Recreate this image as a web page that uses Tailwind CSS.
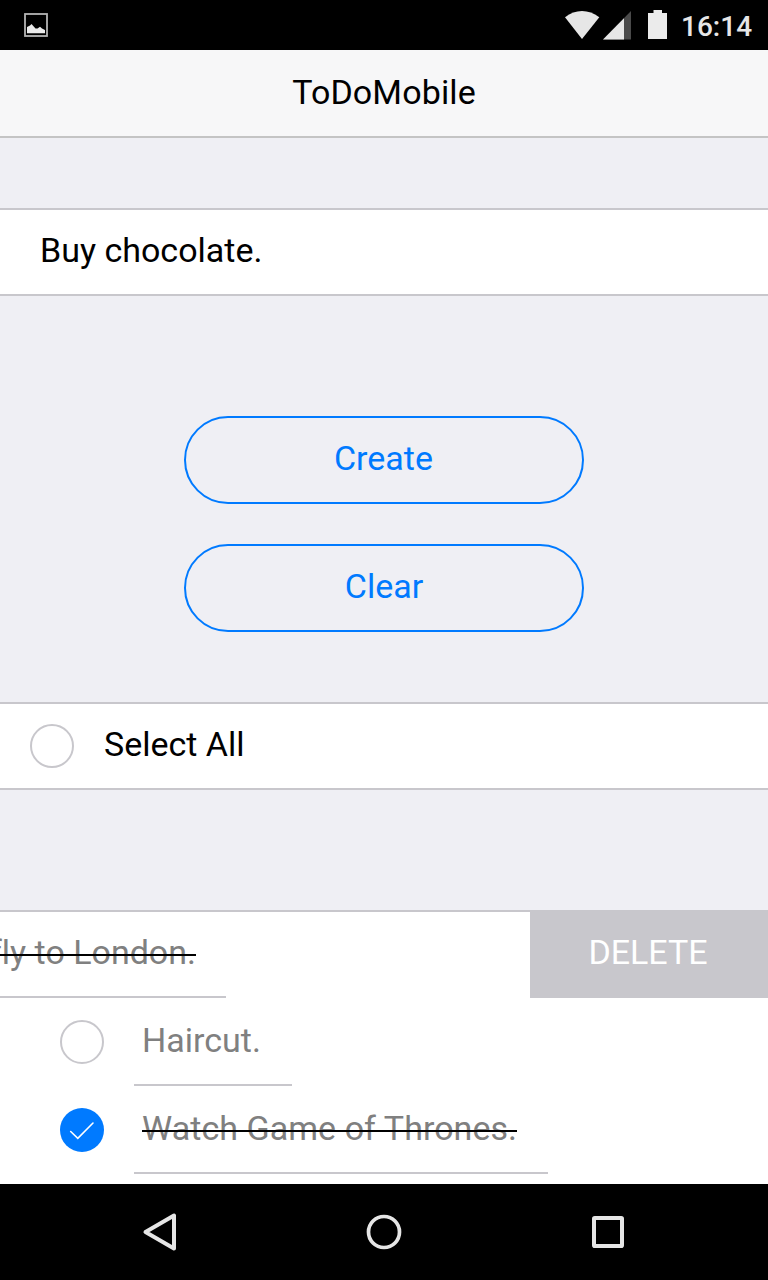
<!DOCTYPE html>
<html lang="en">
<head>
<meta charset="utf-8">
<title>ToDoMobile</title>
<script src="https://cdn.jsdelivr.net/npm/@tailwindcss/browser@4"></script>
</head>
<body class="flex h-[1280px] w-[768px] flex-col overflow-hidden bg-[#efeff4] font-[Roboto,sans-serif] text-[34px] leading-[40px] text-black [font-variant-ligatures:none]">
  <div class="flex h-[50px] shrink-0 items-start bg-black text-[#e6e6e6]">
    <svg class="ml-6 mt-[13px] h-6 w-6 shrink-0" viewBox="0 0 24 24">
      <rect x="1" y="1" width="22" height="22" fill="none" stroke="#b4b4b4" stroke-width="1.8"/>
      <path d="M3 20.300V14L6 12.500L7.500 11L11.500 15.500L13.500 15.500L16 13.800L18 15.500L21 17V20.300Z" fill="#ebebeb"/>
    </svg>
    <svg class="ml-auto h-[50px] w-[110px] shrink-0" viewBox="0 0 110 50">
      <path d="M7 17.200Q15 11 24 11T41.300 17.200L24 39Z" fill="#e6e6e6"/>
      <path d="M45 39.500L73 11V39.500Z" fill="#4a4a4a"/>
      <path d="M45 39.500L66 18.200V39.500Z" fill="#e6e6e6"/>
      <path d="M90 13H95.500V10H104V13H109V39H90Z" fill="#ebebeb"/>
    </svg>
    <div class="mt-[10px] w-[100px] pl-[13px] text-[28px] font-medium leading-[33px]">16:14</div>
  </div>

  <header class="h-[88px] shrink-0 border-b-2 border-[#c4c4c4] bg-[#f7f7f8] pt-[22px] text-center tracking-[0.12px]">ToDoMobile</header>

  <div class="mt-[70px] h-[88px] shrink-0 border-y-2 border-[#c8c7cc] bg-white pl-10 pt-5">Buy chocolate.</div>

  <div class="mt-[120px] flex shrink-0 flex-col items-center gap-10 text-[#007aff]">
    <button class="h-[88px] w-[400px] rounded-full border-2 border-[#007aff] pb-1 pr-px">Create</button>
    <button class="h-[88px] w-[400px] rounded-full border-2 border-[#007aff] pb-1">Clear</button>
  </div>

  <div class="mt-[70px] flex h-[88px] shrink-0 items-start border-y-2 border-[#c8c7cc] bg-white pl-[30px] pt-5">
    <span class="h-11 w-11 rounded-full border-2 border-[#c8c7cc]"></span>
    <span class="ml-[30px]">Select All</span>
  </div>

  <main class="mt-[120px] flex h-[274px] shrink-0 flex-col bg-white text-[#808080]">
    <div class="flex h-[88px] overflow-hidden">
      <!-- Row swiped left: its text runs off the screen edge -->
      <div class="w-[530px] overflow-hidden border-t-2 border-[#c8c7cc]">
        <div class="flex h-[86px] w-[226px] justify-end whitespace-nowrap border-b-2 border-[#c8c7cc] pr-[30px] pt-5">
          <span class="relative h-10 shrink-0">fly to London.<span class="absolute inset-x-0 top-[22px] h-0.5 bg-black"></span></span>
        </div>
      </div>
      <div class="w-[238px] bg-[#c8c7cc] pr-0.5 pt-[22px] text-center text-white">DELETE</div>
    </div>
    <div class="flex h-[88px] shrink-0 items-start pl-[60px]">
      <span class="mt-[22px] h-11 w-11 rounded-full border-2 border-[#c8c7cc]"></span>
      <div class="ml-[30px] h-[88px] w-[158px] border-b-2 border-[#c8c7cc] pl-2 pt-[22px]">Haircut.</div>
    </div>
    <div class="flex h-[88px] shrink-0 items-start pl-[60px]">
      <span class="mt-[22px] h-11 w-11 rounded-full bg-[#007aff]">
        <svg class="h-11 w-11" viewBox="0 0 44 44"><path d="M10.700 23.500L17.800 30.300L33 15" fill="none" stroke="#fff" stroke-width="1.600" stroke-linecap="round"/></svg>
      </span>
      <div class="ml-[30px] flex h-[88px] w-[414px] items-start whitespace-nowrap border-b-2 border-[#c8c7cc] pl-2 pt-[22px] tracking-[0.05px]">
        <span class="relative h-10">Watch Game of Thrones.<span class="absolute inset-x-0 top-[22px] h-0.5 bg-black"></span></span>
      </div>
    </div>
  </main>

  <nav class="flex h-24 shrink-0 items-center justify-between bg-black px-[140px]">
    <svg class="h-10 w-10" viewBox="0 0 40 40"><path d="M5.500 20L34 3.500V36.500Z" fill="none" stroke="#e6e6e6" stroke-width="4" stroke-linejoin="round"/></svg>
    <svg class="h-10 w-10" viewBox="0 0 40 40"><circle cx="20" cy="20" r="15.500" fill="none" stroke="#e6e6e6" stroke-width="3.700"/></svg>
    <svg class="h-10 w-10" viewBox="0 0 40 40"><rect x="6" y="6" width="28" height="28" rx="0.800" fill="none" stroke="#e6e6e6" stroke-width="4"/></svg>
  </nav>
</body>
</html>
